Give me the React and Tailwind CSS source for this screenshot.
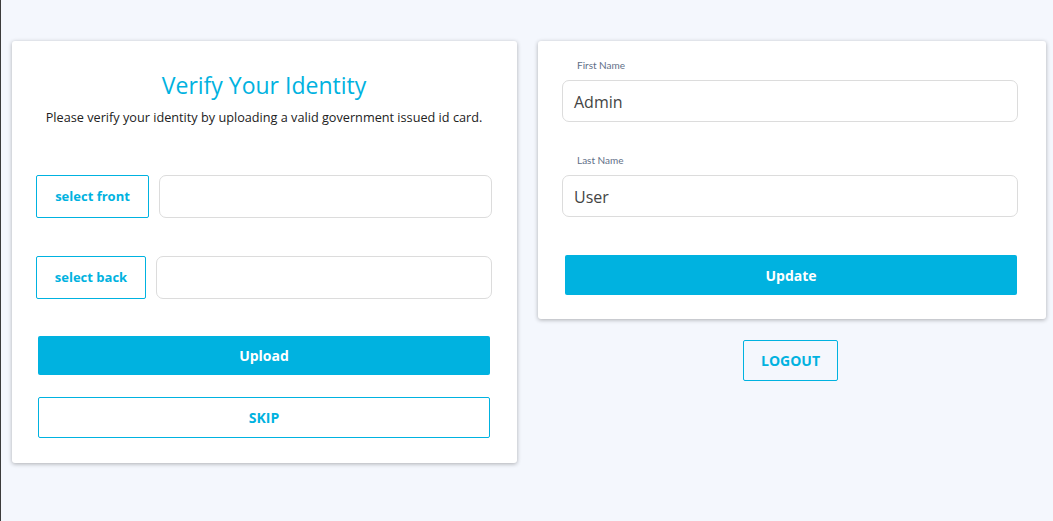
export default function App() {
  return (
    <div className="min-h-screen w-full bg-[#f4f7fd] border-l border-[#3c3c3c]" style={{ fontFamily: '"Open Sans", sans-serif' }}>
      <div className="flex items-start pt-[41px] pl-[11px] gap-[21px]">
        {/* Left card */}
        <div className="w-[505px] bg-white rounded-[3px] shadow-[0_1px_4px_rgba(0,0,0,0.3)] pt-[29px] pb-[25px] pl-[24px] pr-[25px]">
          <h1 className="text-center text-[23px] leading-[30px] font-medium text-[#00b2e0]">Verify Your Identity</h1>
          <p className="mt-[8px] text-center text-[12.7px] leading-[18px] text-[#222]">
            Please verify your identity by uploading a valid government issued id card.
          </p>
          <div className="mt-[49px] flex gap-[10px]">
            <button className="w-[113px] h-[43px] shrink-0 border border-[#00b2e0] rounded-[2px] text-[13px] font-bold text-[#00b2e0]">select front</button>
            <div className="flex-1 h-[43px] border border-[#dcdcdc] rounded-[7px]"></div>
          </div>
          <div className="mt-[38px] flex gap-[10px]">
            <button className="w-[110px] h-[43px] shrink-0 border border-[#00b2e0] rounded-[2px] text-[13px] font-bold text-[#00b2e0]">select back</button>
            <div className="flex-1 h-[43px] border border-[#dcdcdc] rounded-[7px]"></div>
          </div>
          <div className="px-[2px]">
            <button className="mt-[37px] w-full h-[39px] bg-[#00b2e0] rounded-[2px] text-white text-[14px] font-bold">Upload</button>
            <button className="mt-[22px] w-full h-[41px] border border-[#00b2e0] rounded-[2px] text-[#00b2e0] text-[14px] font-bold">SKIP</button>
          </div>
        </div>

        {/* Right column */}
        <div className="w-[508px] flex flex-col items-center">
          <div className="w-full bg-white rounded-[3px] shadow-[0_1px_4px_rgba(0,0,0,0.3)] pt-[18px] pb-[24px] pl-[24px] pr-[28px]">
            <label className="block pl-[15px] text-[10px] leading-[12px] text-[#5f6f87]" style={{ fontFamily: 'Lato, sans-serif' }}>First Name</label>
            <div className="mt-[9px] h-[42px] border border-[#dcdcdc] rounded-[7px] flex items-center px-[11px] pt-[2px] text-[16px] text-[#444]">Admin</div>
            <label className="block mt-[32px] pl-[15px] text-[10px] leading-[12px] text-[#5f6f87]" style={{ fontFamily: 'Lato, sans-serif' }}>Last Name</label>
            <div className="mt-[9px] h-[42px] border border-[#dcdcdc] rounded-[7px] flex items-center px-[11px] pt-[2px] text-[16px] text-[#444]">User</div>
            <div className="pl-[3px] pr-[1px]">
              <button className="mt-[38px] w-full h-[40px] bg-[#00b2e0] rounded-[2px] text-white text-[14px] font-bold">Update</button>
            </div>
          </div>
          <button className="mt-[21px] w-[95px] h-[41px] border border-[#00b2e0] rounded-[2px] text-[#00b2e0] text-[14px] font-bold mr-[3px]">LOGOUT</button>
        </div>
      </div>
    </div>
  );
}
